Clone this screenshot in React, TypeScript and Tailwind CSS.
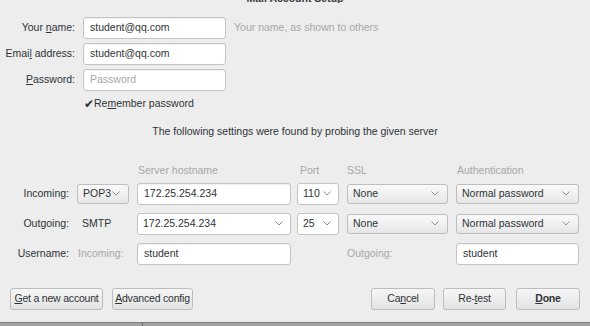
import React from 'react';

const FONT = { fontFamily: '"Liberation Sans", Arial, sans-serif' };

function Chevron() {
  return (
    <svg width="8" height="5" viewBox="0 0 8 5" className="shrink-0">
      <polyline points="0.5,0.5 4,4 7.5,0.5" fill="none" stroke="#8f8f8f" strokeWidth="1" />
    </svg>
  );
}

function Field({ value, placeholder, className = '' }: { value?: string; placeholder?: string; className?: string }) {
  return (
    <div
      className={`h-[22px] flex items-center px-[6px] bg-white border border-[#c4c4c4] rounded-[3px] shadow-[inset_0_1px_1px_rgba(0,0,0,0.06)] ${className}`}
    >
      {value ? (
        <span className="text-[#2e3436]">{value}</span>
      ) : (
        <span className="text-[#a8a8a8]">{placeholder}</span>
      )}
    </div>
  );
}

function Select({ value, className = '' }: { value: string; className?: string }) {
  return (
    <div
      className={`h-[20px] flex items-center justify-between pl-[5px] pr-[8px] border border-[#bdbdbd] rounded-[3px] bg-gradient-to-b from-[#fafafa] to-[#e6e6e6] ${className}`}
    >
      <span className="text-[#2e3436]">{value}</span>
      <Chevron />
    </div>
  );
}

function Combo({ value, className = '' }: { value: string; className?: string }) {
  return (
    <div
      className={`h-[22px] flex items-center justify-between pl-[5px] pr-[7px] bg-white border border-[#c4c4c4] rounded-[3px] ${className}`}
    >
      <span className="text-[#2e3436]">{value}</span>
      <Chevron />
    </div>
  );
}

function Btn({ children, className = '' }: { children: React.ReactNode; className?: string }) {
  return (
    <div
      className={`h-[22px] flex items-center justify-center whitespace-nowrap tracking-[-0.2px] border border-[#bcbcbc] rounded-[3px] bg-gradient-to-b from-[#f6f6f6] to-[#e3e3e3] text-[#2e3436] ${className}`}
    >
      {children}
    </div>
  );
}

export default function App() {
  return (
    <div className="w-[590px] h-[326px] bg-[#ededed] flex flex-col text-[10.5px] text-[#2e3436] overflow-hidden" style={FONT}>
      {/* clipped title */}
      <div className="h-[3px] overflow-hidden flex items-end justify-center">
        <span className="leading-[12px] font-bold text-[#3a3a3a] mb-[-1px]">Mail Account Setup</span>
      </div>

      {/* identity fields */}
      <div className="mt-[14px] grid grid-cols-[83px_143px_auto] gap-y-[4px] items-center">
        <span className="text-right pr-[8px]">Your <u>n</u>ame:</span>
        <Field value="student@qq.com" />
        <span className="pl-[8px] text-[#a8a8a8]">Your name, as shown to others</span>

        <span className="text-right pr-[8px]">Emai<u>l</u> address:</span>
        <Field value="student@qq.com" />
        <span />

        <span className="text-right pr-[8px]"><u>P</u>assword:</span>
        <Field placeholder="Password" />
        <span />
      </div>

      <div className="ml-[84px] mt-[5px] h-[16px] flex items-center">
        <span className="text-[12px] leading-none">✔</span>
        <span>Re<u>m</u>ember password</span>
      </div>

      <div className="mt-[12px] text-center">The following settings were found by probing the given server</div>

      {/* server settings */}
      <div className="mt-[23px] grid grid-cols-[77px_60px_160px_50px_109px_123px] gap-y-[8px] items-center">
        <span />
        <span />
        <span className="text-[#a8a8a8] pl-[1px] -mb-[4px]">Server hostname</span>
        <span className="text-[#a8a8a8] pl-[3px] -mb-[4px]">Port</span>
        <span className="text-[#a8a8a8] -mb-[4px]">SSL</span>
        <span className="text-[#a8a8a8] pl-[1px] -mb-[4px]">Authentication</span>

        <span className="text-right pr-[8px]">Incoming:</span>
        <Select value="POP3" className="w-[52px]" />
        <Field value="172.25.254.234" className="w-[154px]" />
        <Combo value="110" className="w-[42px]" />
        <Select value="None" className="w-[101px]" />
        <Select value="Normal password" className="w-[123px]" />

        <span className="text-right pr-[8px]">Outgoing:</span>
        <span className="pl-[5px]">SMTP</span>
        <Combo value="172.25.254.234" className="w-[154px]" />
        <Combo value="25" className="w-[42px]" />
        <Select value="None" className="w-[101px]" />
        <Select value="Normal password" className="w-[123px]" />

        <span className="text-right pr-[8px]">Username:</span>
        <span className="pl-[1px] text-[#a8a8a8]">Incoming:</span>
        <Field value="student" className="w-[154px]" />
        <span />
        <span className="text-[#a8a8a8]">Outgoing:</span>
        <Field value="student" className="w-[123px]" />
      </div>

      {/* buttons */}
      <div className="mt-auto mb-[12px] flex items-center px-[10px]">
        <Btn className="w-[93px]"><span><u>G</u>et a new account</span></Btn>
        <Btn className="w-[81px] ml-[9px]"><span><u>A</u>dvanced config</span></Btn>
        <div className="flex-1" />
        <Btn className="w-[64px]"><span>Ca<u>n</u>cel</span></Btn>
        <Btn className="w-[63px] ml-[8px]"><span>Re-<u>t</u>est</span></Btn>
        <Btn className="w-[64px] ml-[10px] h-[18px] border-[#a8a8a8]"><span className="font-semibold"><u>D</u>one</span></Btn>
      </div>

      {/* bottom panel edge */}
      <div className="h-[4px] flex border-t border-[#7e7e7e] bg-[#a2a2a2]">
        <div className="w-[143px] border-r border-[#6e6e6e]" />
      </div>
    </div>
  );
}
